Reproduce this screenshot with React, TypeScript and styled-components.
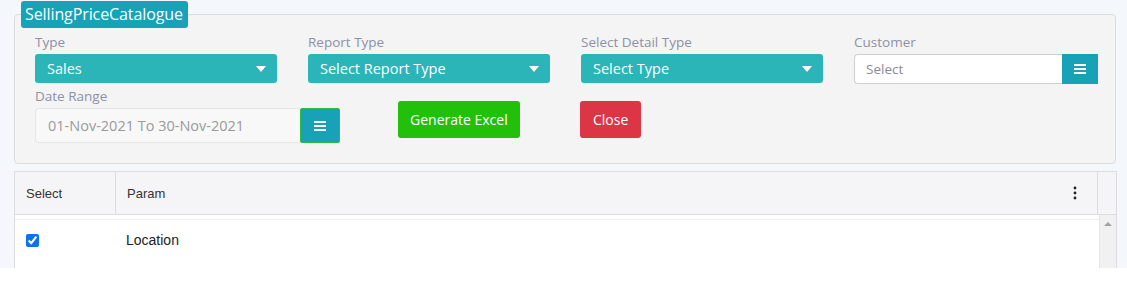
import styled, { createGlobalStyle } from "styled-components";

const GlobalStyle = createGlobalStyle`
  body {
    margin: 0;
    background: #ffffff;
    font-family: "Open Sans", "Liberation Sans", sans-serif;
  }
  * {
    box-sizing: border-box;
  }
`;

const Page = styled.div`
  height: 268px;
  overflow: hidden;
  background: #f4f7fc;
  padding: 1px 10px 0 14px;
`;

const Panel = styled.fieldset`
  margin: 0;
  width: 1102px;
  padding: 0 0 20px 20px;
  background: #f4f4f4;
  border: 1px solid #dcdcdc;
  border-radius: 4px;
`;

const Badge = styled.legend`
  margin-left: -14px;
  padding: 0 5px 0 4px;
  height: 27px;
  line-height: 27px;
  background: #17a2b8;
  color: #ffffff;
  font-size: 16px;
  border-radius: 3px;
  letter-spacing: -0.1px;
`;

const TopRow = styled.div`
  display: grid;
  grid-template-columns: repeat(4, 242px);
  column-gap: 31px;
  padding-top: 7px;
`;

const BottomRow = styled.div`
  display: grid;
  grid-template-columns: 363px 182px auto;
  align-items: start;
  padding-top: 5px;
`;

const Field = styled.div<{ $width?: number }>`
  display: flex;
  flex-direction: column;
  width: ${(p) => (p.$width ? `${p.$width}px` : "auto")};
`;

const Label = styled.label`
  height: 19px;
  line-height: 14px;
  font-size: 13.5px;
  color: #8d90a6;
`;

const SelectBox = styled.div`
  display: flex;
  align-items: center;
  justify-content: space-between;
  height: 29px;
  padding: 0 11px 0 12px;
  background: #2bb5b8;
  border-radius: 3px;
  color: #ffffff;
  font-size: 14.5px;
`;

const Caret = styled.span`
  width: 0;
  height: 0;
  border-left: 5px solid transparent;
  border-right: 5px solid transparent;
  border-top: 6px solid #ffffff;
`;

const InputGroup = styled.div`
  display: flex;
`;

const TextBox = styled.div<{ $height: number; $muted?: boolean }>`
  flex: 1;
  display: flex;
  align-items: center;
  height: ${(p) => p.$height}px;
  padding-left: ${(p) => (p.$muted ? 12 : 11)}px;
  background: ${(p) => (p.$muted ? "#f8f8f8" : "#ffffff")};
  border: 1px solid ${(p) => (p.$muted ? "#e6e6e6" : "#cfcfcf")};
  border-right: none;
  border-radius: 4px 0 0 4px;
  color: ${(p) => (p.$muted ? "#9a9a9a" : "#8a8a98")};
  font-size: ${(p) => (p.$muted ? 14.5 : 13.5)}px;
`;

const MenuButton = styled.div<{ $width: number; $height: number; $outlined?: boolean }>`
  display: flex;
  align-items: center;
  justify-content: center;
  width: ${(p) => p.$width}px;
  height: ${(p) => p.$height}px;
  background: #17a2b8;
  border: ${(p) => (p.$outlined ? "1px solid #2cbf3a" : "none")};
  border-radius: ${(p) => (p.$outlined ? "2px" : "0")};
`;

const ActionButton = styled.button<{ $tone: "green" | "red" }>`
  margin-top: 12px;
  height: 37px;
  padding: 0 ${(p) => (p.$tone === "green" ? 12 : 13)}px;
  border: none;
  border-radius: 3px;
  background: ${(p) => (p.$tone === "green" ? "#22bf0b" : "#dc3545")};
  color: #ffffff;
  font-family: inherit;
  font-size: 14px;
  font-weight: 500;
`;

const Grid = styled.div`
  margin-top: 7px;
  width: 1103px;
  background: #ffffff;
  border: 1px solid #dddddd;
  border-bottom: none;
  font-family: "Liberation Sans", Arial, sans-serif;
`;

const HeadRow = styled.div`
  display: grid;
  grid-template-columns: 101px 1fr 18px;
  height: 43px;
  background: #f5f5f7;
  border-bottom: 1px solid #dddddd;
`;

const HeadCell = styled.div<{ $last?: boolean }>`
  display: flex;
  align-items: center;
  justify-content: space-between;
  padding: 0 20px 0 11px;
  border-right: ${(p) => (p.$last ? "none" : "1px solid #dddddd")};
  font-size: 13px;
  color: #333333;
`;

const Body = styled.div`
  display: grid;
  grid-template-columns: 1fr 17px;
  height: 60px;
`;

const Rows = styled.div`
  border-top: 4px solid #ffffff;
  box-shadow: inset 0 5px 0 -4px #eeeef4;
`;

const DataRow = styled.div`
  display: grid;
  grid-template-columns: 101px 1fr;
  align-items: center;
  height: 38px;
  padding-top: 4px;
`;

const CheckCell = styled.div`
  padding-left: 11px;
  display: flex;

  input {
    margin: 0;
    width: 13px;
    height: 13px;
    accent-color: #0b72f0;
  }
`;

const ParamCell = styled.div`
  padding-left: 10px;
  font-size: 14px;
  color: #222222;
`;

const ScrollTrack = styled.div`
  background: #f1f1f1;
  border-left: 1px solid #e4e4e4;
  display: flex;
  justify-content: center;
  padding-top: 7px;
`;

const ScrollArrow = styled.span`
  width: 0;
  height: 0;
  border-left: 4px solid transparent;
  border-right: 4px solid transparent;
  border-bottom: 4px solid #a3a3a3;
`;

function Bars() {
  return (
    <svg width="12" height="10" viewBox="0 0 12 10">
      <rect x="0" y="0" width="12" height="2" fill="#ffffff" />
      <rect x="0" y="4" width="12" height="2" fill="#ffffff" />
      <rect x="0" y="8" width="12" height="2" fill="#ffffff" />
    </svg>
  );
}

function Kebab() {
  return (
    <svg width="4" height="14" viewBox="0 0 4 14">
      <circle cx="2" cy="2" r="1.4" fill="#222222" />
      <circle cx="2" cy="7" r="1.4" fill="#222222" />
      <circle cx="2" cy="12" r="1.4" fill="#222222" />
    </svg>
  );
}

const selects = [
  { label: "Type", value: "Sales" },
  { label: "Report Type", value: "Select Report Type" },
  { label: "Select Detail Type", value: "Select Type" },
];

export default function App() {
  return (
    <>
      <GlobalStyle />
      <Page>
        <Panel>
          <Badge>SellingPriceCatalogue</Badge>
          <TopRow>
            {selects.map((s) => (
              <Field key={s.label}>
                <Label>{s.label}</Label>
                <SelectBox>
                  {s.value}
                  <Caret />
                </SelectBox>
              </Field>
            ))}
            <Field $width={244}>
              <Label>Customer</Label>
              <InputGroup>
                <TextBox $height={30}>Select</TextBox>
                <MenuButton $width={36} $height={30}>
                  <Bars />
                </MenuButton>
              </InputGroup>
            </Field>
          </TopRow>
          <BottomRow>
            <Field $width={305}>
              <Label>Date Range</Label>
              <InputGroup>
                <TextBox $height={35} $muted>
                  01-Nov-2021 To 30-Nov-2021
                </TextBox>
                <MenuButton $width={40} $height={35} $outlined>
                  <Bars />
                </MenuButton>
              </InputGroup>
            </Field>
            <div>
              <ActionButton $tone="green">Generate Excel</ActionButton>
            </div>
            <div>
              <ActionButton $tone="red">Close</ActionButton>
            </div>
          </BottomRow>
        </Panel>
        <Grid>
          <HeadRow>
            <HeadCell>Select</HeadCell>
            <HeadCell>
              Param
              <Kebab />
            </HeadCell>
            <HeadCell $last />
          </HeadRow>
          <Body>
            <Rows>
              <DataRow>
                <CheckCell>
                  <input type="checkbox" defaultChecked />
                </CheckCell>
                <ParamCell>Location</ParamCell>
              </DataRow>
            </Rows>
            <ScrollTrack>
              <ScrollArrow />
            </ScrollTrack>
          </Body>
        </Grid>
      </Page>
    </>
  );
}
